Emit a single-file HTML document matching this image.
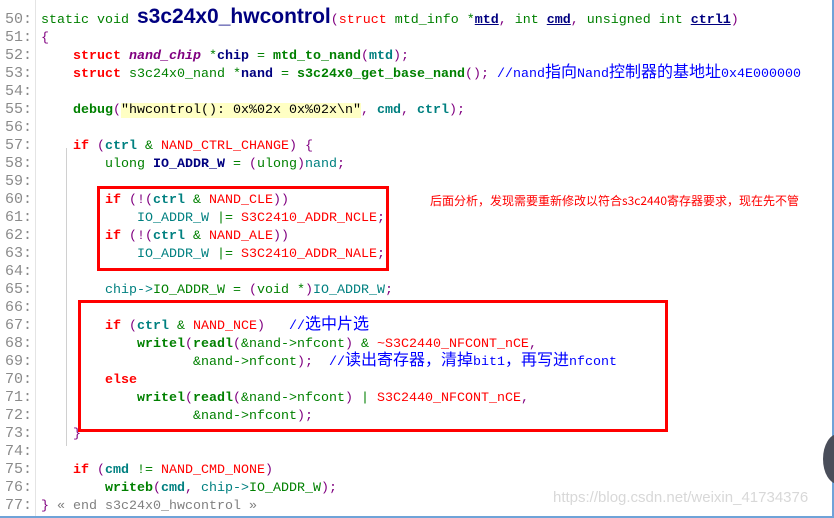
<!DOCTYPE html>
<html><head><meta charset="utf-8">
<style>
html,body{margin:0;padding:0;background:#fff;width:834px;height:518px;overflow:hidden;position:relative}
.ln{position:absolute;left:5px;font:15px "Liberation Mono",monospace;color:#8a8a8a;white-space:pre;line-height:18px;margin-top:3px}
.c{position:absolute;left:41px;font:13.33px "Liberation Mono","Noto Sans CJK SC",monospace;white-space:pre;line-height:18px;height:18px;color:#000;margin-top:4px}
.k{color:#ff0000;font-weight:bold}.kw{color:#ff0000}
.g{color:#008000}.gb{color:#008000;font-weight:bold}
.t{color:#008080}.tb{color:#008080;font-weight:bold}
.n{color:#000080;font-weight:bold}.u{text-decoration:underline}
.p{color:#800080}.pi{color:#800080;font-weight:bold;font-style:italic}
.cm{color:#0000ff}
.z{font-family:"Noto Sans CJK SC",sans-serif;font-size:16px;line-height:0}
.box{position:absolute;border:3px solid #ff0000;box-sizing:border-box}
</style></head><body>
<div style="position:absolute;left:35px;top:0;width:1px;height:518px;background:#e4e4e4"></div>
<div style="position:absolute;left:66px;top:148px;width:1px;height:298px;background:#d0d0d0"></div>
<div style="position:absolute;left:832px;top:0;width:2px;height:518px;background:#6fa3d8"></div>
<div style="position:absolute;left:0;top:516px;width:834px;height:2px;background:#6fa3d8"></div>
<div style="position:absolute;left:823px;top:434px;width:30px;height:50px;border-radius:50%;background:#4a4e5a"></div>

<div class="ln" style="top:8px">50:</div><div class="ln" style="top:26px">51:</div><div class="ln" style="top:44px">52:</div><div class="ln" style="top:62px">53:</div><div class="ln" style="top:80px">54:</div><div class="ln" style="top:98px">55:</div><div class="ln" style="top:116px">56:</div><div class="ln" style="top:134px">57:</div><div class="ln" style="top:152px">58:</div><div class="ln" style="top:170px">59:</div><div class="ln" style="top:188px">60:</div><div class="ln" style="top:206px">61:</div><div class="ln" style="top:224px">62:</div><div class="ln" style="top:242px">63:</div><div class="ln" style="top:260px">64:</div><div class="ln" style="top:278px">65:</div><div class="ln" style="top:296px">66:</div><div class="ln" style="top:314px">67:</div><div class="ln" style="top:332px">68:</div><div class="ln" style="top:350px">69:</div><div class="ln" style="top:368px">70:</div><div class="ln" style="top:386px">71:</div><div class="ln" style="top:404px">72:</div><div class="ln" style="top:422px">73:</div><div class="ln" style="top:440px">74:</div><div class="ln" style="top:458px">75:</div><div class="ln" style="top:476px">76:</div><div class="ln" style="top:494px">77:</div>

<div class="c" style="top:8px"><span class="g">static void </span><span style="font:bold 21px/0 'Liberation Sans',sans-serif;color:#000080">s3c24x0_hwcontrol</span><span class="p">(</span><span class="kw">struct</span> <span class="g">mtd_info</span> <span class="g">*</span><span class="n u">mtd</span><span class="p">,</span> <span class="g">int</span> <span class="n u">cmd</span><span class="p">,</span> <span class="g">unsigned int</span> <span class="n u">ctrl1</span><span class="p">)</span></div>
<div class="c" style="top:26px"><span class="p">{</span></div>
<div class="c" style="top:44px">    <span class="k">struct</span> <span class="pi">nand_chip</span> <span class="g">*</span><span class="n">chip</span> <span class="g">=</span> <span class="gb">mtd_to_nand</span><span class="p">(</span><span class="tb">mtd</span><span class="p">);</span></div>
<div class="c" style="top:62px">    <span class="k">struct</span> <span class="g">s3c24x0_nand</span> <span class="g">*</span><span class="n">nand</span> <span class="g">=</span> <span class="gb">s3c24x0_get_base_nand</span><span class="p">();</span> <span class="cm">//nand<span class="z">指向</span>Nand<span class="z">控制器的基地址</span>0x4E000000</span></div>
<div class="c" style="top:98px">    <span class="gb">debug</span><span class="p">(</span><span style="background:#ffffc4">"hwcontrol(): 0x%02x 0x%02x\n"</span><span class="p">,</span> <span class="tb">cmd</span><span class="p">,</span> <span class="tb">ctrl</span><span class="p">);</span></div>
<div class="c" style="top:134px">    <span class="k">if</span> <span class="p">(</span><span class="tb">ctrl</span> <span class="g">&amp;</span> <span class="kw">NAND_CTRL_CHANGE</span><span class="p">)</span> <span class="p">{</span></div>
<div class="c" style="top:152px">        <span class="g">ulong</span> <span class="n">IO_ADDR_W</span> <span class="g">=</span> <span class="p">(</span><span class="g">ulong</span><span class="p">)</span><span class="t">nand</span><span class="p">;</span></div>
<div class="c" style="top:188px">        <span class="k">if</span> <span class="p">(!(</span><span class="tb">ctrl</span> <span class="g">&amp;</span> <span class="kw">NAND_CLE</span><span class="p">))</span></div>
<div class="c" style="top:206px">            <span class="t">IO_ADDR_W</span> <span class="g">|=</span> <span class="kw">S3C2410_ADDR_NCLE</span><span class="p">;</span></div>
<div class="c" style="top:224px">        <span class="k">if</span> <span class="p">(!(</span><span class="tb">ctrl</span> <span class="g">&amp;</span> <span class="kw">NAND_ALE</span><span class="p">))</span></div>
<div class="c" style="top:242px">            <span class="t">IO_ADDR_W</span> <span class="g">|=</span> <span class="kw">S3C2410_ADDR_NALE</span><span class="p">;</span></div>
<div class="c" style="top:278px">        <span class="t">chip-&gt;</span><span class="g">IO_ADDR_W</span> <span class="g">=</span> <span class="p">(</span><span class="g">void *</span><span class="p">)</span><span class="t">IO_ADDR_W</span><span class="p">;</span></div>
<div class="c" style="top:314px">        <span class="k">if</span> <span class="p">(</span><span class="tb">ctrl</span> <span class="g">&amp;</span> <span class="kw">NAND_NCE</span><span class="p">)</span>   <span class="cm">//<span class="z">选中片选</span></span></div>
<div class="c" style="top:332px">            <span class="gb">writel</span><span class="p">(</span><span class="gb">readl</span><span class="p">(</span><span class="g">&amp;nand-&gt;nfcont</span><span class="p">)</span> <span class="g">&amp;</span> <span class="kw">~S3C2440_NFCONT_nCE</span><span class="p">,</span></div>
<div class="c" style="top:350px">                   <span class="g">&amp;nand-&gt;nfcont</span><span class="p">);</span>  <span class="cm">//<span class="z">读出寄存器，清掉</span>bit1<span class="z">，再写进</span>nfcont</span></div>
<div class="c" style="top:368px">        <span class="k">else</span></div>
<div class="c" style="top:386px">            <span class="gb">writel</span><span class="p">(</span><span class="gb">readl</span><span class="p">(</span><span class="g">&amp;nand-&gt;nfcont</span><span class="p">)</span> <span class="g">|</span> <span class="kw">S3C2440_NFCONT_nCE</span><span class="p">,</span></div>
<div class="c" style="top:404px">                   <span class="g">&amp;nand-&gt;nfcont</span><span class="p">);</span></div>
<div class="c" style="top:422px">    <span class="p">}</span></div>
<div class="c" style="top:458px">    <span class="k">if</span> <span class="p">(</span><span class="tb">cmd</span> <span class="g">!=</span> <span class="kw">NAND_CMD_NONE</span><span class="p">)</span></div>
<div class="c" style="top:476px">        <span class="gb">writeb</span><span class="p">(</span><span class="tb">cmd</span><span class="p">,</span> <span class="t">chip-&gt;</span><span class="g">IO_ADDR_W</span><span class="p">);</span></div>
<div class="c" style="top:494px"><span class="p">}</span> <span style="color:#808080">« end s3c24x0_hwcontrol »</span></div>

<div class="box" style="left:97px;top:186px;width:292px;height:85px"></div>
<div class="box" style="left:78px;top:300px;width:590px;height:132px"></div>
<div style="position:absolute;left:430px;top:192px;font:12px 'Noto Sans CJK SC',sans-serif;color:#ff0000;white-space:pre">后面分析，发现需要重新修改以符合s3c2440寄存器要求，现在先不管</div>
<div style="position:absolute;left:553px;top:489px;font:15px 'Liberation Sans',sans-serif;color:#d8d8d8;white-space:pre">https://blog.csdn.net/weixin_41734376</div>
</body></html>
